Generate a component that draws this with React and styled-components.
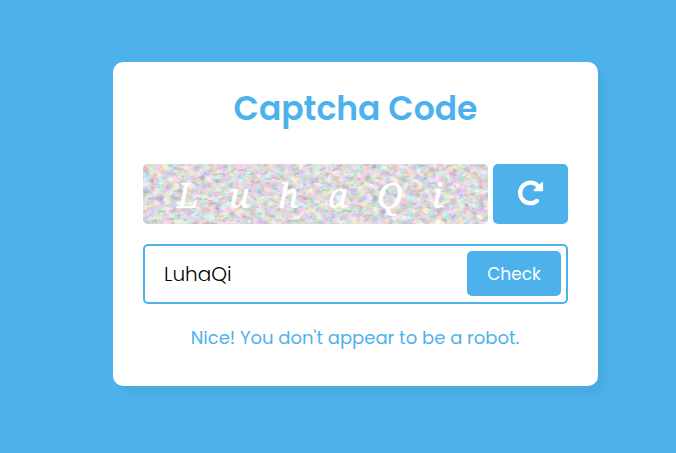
import React from "react";
import styled, { createGlobalStyle } from "styled-components";

const blue = "#4db2ec";

const GlobalStyle = createGlobalStyle`
  * { box-sizing: border-box; margin: 0; padding: 0; }
  body {
    background: ${blue};
    font-family: Poppins, Inter, sans-serif;
    overflow: hidden;
  }
`;

const Page = styled.main`
  height: 453px;
  padding: 62px 0 0 113px;
`;

const Card = styled.section`
  width: 485px;
  height: 324px;
  padding: 22px 30px 0;
  border-radius: 10px;
  background: #fff;
  box-shadow: 8px 8px 8px rgba(0, 0, 0, 0.05);
`;

const Title = styled.h1`
  color: ${blue};
  font-size: 33px;
  font-weight: 600;
  line-height: 50px;
  text-align: center;
`;

const CaptchaRow = styled.div`
  display: flex;
  gap: 5px;
  height: 60px;
  margin-top: 30px;
`;

const Captcha = styled.div`
  display: grid;
  width: 345px;
  border-radius: 5px;
  overflow: hidden;
  background: #dedbdc;
  > * { grid-area: 1 / 1; }
`;

const Letters = styled.div`
  display: grid;
  grid-template-columns: 52px 49px 50px 49px 55px 30px;
  padding-left: 34px;
  z-index: 1;
  color: #fff;
  font: italic 35px/61px "Noto Serif", "Liberation Serif", serif;
  text-shadow: 0 0 1px rgba(255, 255, 255, 0.8);
`;

const ReloadButton = styled.button`
  display: flex;
  align-items: center;
  justify-content: center;
  width: 75px;
  padding-bottom: 3px;
  border: 0;
  border-radius: 5px;
  background: ${blue};
  color: #fff;
`;

const InputRow = styled.form`
  display: flex;
  align-items: center;
  height: 60px;
  margin-top: 20px;
  padding: 0 5px 1px 19px;
  border: 2px solid ${blue};
  border-radius: 5px;
`;

const Field = styled.input`
  flex: 1;
  min-width: 0;
  border: 0;
  outline: 0;
  background: transparent;
  color: #000;
  font: 300 20px Poppins, Inter, sans-serif;
`;

const CheckButton = styled.button`
  width: 94px;
  height: 45px;
  border: 0;
  border-radius: 5px;
  background: ${blue};
  color: #fff;
  font: 400 17px Poppins, Inter, sans-serif;
`;

const Status = styled.p`
  margin-top: 20px;
  padding-right: 1px;
  color: ${blue};
  font-size: 18px;
  line-height: 28px;
  text-align: center;
`;

function Texture() {
  return (
    <svg width="345" height="60" aria-hidden="true">
      <filter id="paint" x="0" y="0" width="100%" height="100%" colorInterpolationFilters="sRGB">
        <feTurbulence type="fractalNoise" baseFrequency="0.14 0.16" numOctaves="3" seed="12" />
        <feColorMatrix values="0.48 0 0 0 0.64  0 0.42 0 0 0.655  0 0 0.48 0 0.635  0 0 0 0 1" />
      </filter>
      <filter id="strokes" x="0" y="0" width="100%" height="100%" colorInterpolationFilters="sRGB">
        <feTurbulence type="fractalNoise" baseFrequency="0.14 0.24" numOctaves="3" seed="31" />
        <feColorMatrix values="0 0.6 0 0 0.25  0 0 0.6 0 0.28  0 0.2 0.4 0 0.3  -9 0 0 0 3.9" />
      </filter>
      <rect width="345" height="60" filter="url(#paint)" />
      <rect width="345" height="60" filter="url(#strokes)" opacity="0.3" />
    </svg>
  );
}

function ReloadIcon() {
  return (
    <svg width="26" height="26" viewBox="0 0 26 26" aria-hidden="true">
      <path
        d="M20.3 6.3 A10.3 10.3 0 1 0 19.3 20.6"
        fill="none"
        stroke="currentColor"
        strokeWidth="4.3"
      />
      <circle cx="19" cy="20.8" r="2.1" fill="currentColor" />
      <path
        d="M24.2 2.8V10.3H16.4Z"
        fill="currentColor"
        stroke="currentColor"
        strokeWidth="1.8"
        strokeLinejoin="round"
      />
    </svg>
  );
}

export default function App() {
  return (
    <>
      <GlobalStyle />
      <Page>
        <Card>
          <Title>Captcha Code</Title>
          <CaptchaRow>
            <Captcha>
              <Texture />
              <Letters>
                {[..."LuhaQi"].map((letter, i) => <span key={i}>{letter}</span>)}
              </Letters>
            </Captcha>
            <ReloadButton type="button" aria-label="Reload"><ReloadIcon /></ReloadButton>
          </CaptchaRow>
          <InputRow>
            <Field defaultValue="LuhaQi" />
            <CheckButton type="button">Check</CheckButton>
          </InputRow>
          <Status>Nice! You don't appear to be a robot.</Status>
        </Card>
      </Page>
    </>
  );
}
